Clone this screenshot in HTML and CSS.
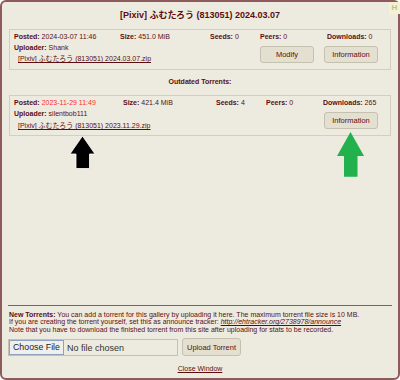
FILE: index.html
```html
<!DOCTYPE html>
<html lang="en">
<head>
    <meta charset="UTF-8">
    <title>Torrents</title>
    <link rel="stylesheet" href="styles.css">
</head>
<body>
    <div class="window">
        <div class="h-badge">H</div>

        <h1 class="title">[Pixiv] ふむたろう (813051) 2024.03.07</h1>

        <form class="torrent torrent-current">
            <div class="stats">
                <span><b>Posted:</b> 2024-03-07 11:46</span>
                <span><b>Size:</b> 451.0 MiB</span>
                <span><b>Seeds:</b> 0</span>
                <span><b>Peers:</b> 0</span>
                <span><b>Downloads:</b> 0</span>
            </div>
            <div class="torrent-bottom">
                <div class="torrent-left">
                    <div class="uploader"><b>Uploader:</b> Shank</div>
                    <a href="#" class="torrent-link">[Pixiv] ふむたろう (813051) 2024.03.07.zip</a>
                </div>
                <button type="button" class="btn">Modify</button>
                <button type="button" class="btn">Information</button>
            </div>
        </form>

        <h2 class="section-title">Outdated Torrents:</h2>

        <form class="torrent torrent-old">
            <div class="stats">
                <span><b>Posted:</b> <span class="old-date">2023-11-29 11:49</span></span>
                <span><b>Size:</b> 421.4 MiB</span>
                <span><b>Seeds:</b> 4</span>
                <span><b>Peers:</b> 0</span>
                <span><b>Downloads:</b> 265</span>
            </div>
            <div class="torrent-bottom">
                <div class="torrent-left">
                    <div class="uploader"><b>Uploader:</b> silentbob111</div>
                    <a href="#" class="torrent-link">[Pixiv] ふむたろう (813051) 2023.11.29.zip</a>
                </div>
                <button type="button" class="btn">Information</button>
            </div>
        </form>

        <!-- annotation arrows -->
        <svg class="arrow arrow-black" width="28" height="35" viewBox="0 0 28 35">
            <polygon points="13.5,1 1,19 7,19 7,33.5 20.5,33.5 20.5,19 26,19" fill="#000" stroke="#fff" stroke-width="0.8"/>
        </svg>
        <svg class="arrow arrow-green" width="30" height="47" viewBox="0 0 30 47">
            <polygon points="14.5,1 1,25 8,25 8,45.7 21.5,45.7 21.5,25 28,25" fill="#22b14c"/>
        </svg>

        <div class="footer">
            <hr class="divider">
            <p class="notes">
                <b>New Torrents:</b> You can add a torrent for this gallery by uploading it here. The maximum torrent file size is 10 MB.<br>
                If you are creating the torrent yourself, set this as announce tracker: <a href="#" class="tracker">http://ehtracker.org/2738978/announce</a><br>
                Note that you have to download the finished torrent from this site after uploading for stats to be recorded.
            </p>
            <div class="upload-row">
                <input type="file" class="file-input">
                <button type="button" class="btn btn-upload">Upload Torrent</button>
            </div>
            <a href="#" class="close-link">Close Window</a>
        </div>
    </div>
</body>
</html>
```

FILE: styles.css
```css
* {
    box-sizing: border-box;
    margin: 0;
    padding: 0;
}

body {
    font-family: "Liberation Sans", Arial, "Noto Sans CJK JP", sans-serif;
    font-size: 7px;
    line-height: 10px;
    color: #5c0d11;
    background: #fff;
}

.window {
    position: relative;
    display: flex;
    flex-direction: column;
    width: 400px;
    height: 380px;
    padding: 0 7px;
    background: #edebdf;
    border: 2px solid #8d5b5b;
    border-radius: 6px;
}

.h-badge {
    position: absolute;
    top: 0;
    right: -2px;
    width: 11px;
    height: 12px;
    background: #f4f1cf;
    color: #c2bd9f;
    font-size: 8px;
    font-weight: bold;
    line-height: 12px;
    text-align: center;
}

.title {
    margin-top: 8px;
    font-size: 9px;
    line-height: 10px;
    font-weight: bold;
    text-align: center;
}

.torrent {
    border: 1px solid #d3cfbf;
    padding: 2px 12px 5px 4px;
}

.torrent-current {
    margin-top: 9px;
}

.torrent-old {
    margin-top: 8px;
    padding-bottom: 4px;
}

.stats {
    display: grid;
}

.torrent-current .stats {
    grid-template-columns: 106px 90px 50px 67px auto;
}

.torrent-old .stats {
    grid-template-columns: 109px 93px 50px 57px auto;
}

.old-date {
    color: #ff2b2b;
}

.torrent-bottom {
    display: flex;
    align-items: flex-start;
    gap: 10px;
}

.torrent-left {
    flex: 1;
    display: flex;
    flex-direction: column;
    align-items: flex-start;
}

.uploader {
    margin-top: 1px;
}

.torrent-link {
    margin: 1px 0 0 4px;
    color: #5c0d11;
}

.torrent-old .torrent-link {
    margin-top: 2px;
}

.btn {
    width: 54px;
    height: 17px;
    margin-top: 4px;
    font-family: inherit;
    font-size: 7.5px;
    color: #5c0d11;
    background: #e3e0d1;
    border: 1px solid #c5c1ae;
    border-radius: 3px;
    cursor: pointer;
}

.section-title {
    margin-top: 7px;
    font-size: 7px;
    line-height: 10px;
    font-weight: bold;
    text-align: center;
}

.arrow {
    position: absolute;
}

.arrow-black {
    left: 67px;
    top: 133px;
}

.arrow-green {
    left: 334px;
    top: 129px;
}

.footer {
    margin-top: auto;
    padding-bottom: 4px;
}

.divider {
    border: none;
    border-top: 1px solid #8d5b5b;
    margin: 0 -1px;
}

.notes {
    margin-top: 5px;
    line-height: 7.5px;
}

.tracker {
    color: #5c0d11;
    font-style: italic;
}

.upload-row {
    display: flex;
    align-items: center;
    gap: 4px;
    margin: 5px 0 0 -1px;
}

.file-input {
    width: 170px;
    height: 17px;
    font-family: inherit;
    font-size: 9px;
    color: #333;
    background: #edebdf;
    border: 1px solid #c5c1ae;
}

.file-input::file-selector-button {
    height: 15px;
    margin-right: 3px;
    padding: 0 3px;
    font-family: inherit;
    font-size: 8.8px;
    color: #222;
    background: #efefef;
    border: 1px solid #8fa2bd;
}

.btn-upload {
    width: 59px;
    height: 18px;
    margin-top: 0;
}

.close-link {
    display: block;
    width: fit-content;
    margin: 8px auto 0;
    color: #5c0d11;
}
```
